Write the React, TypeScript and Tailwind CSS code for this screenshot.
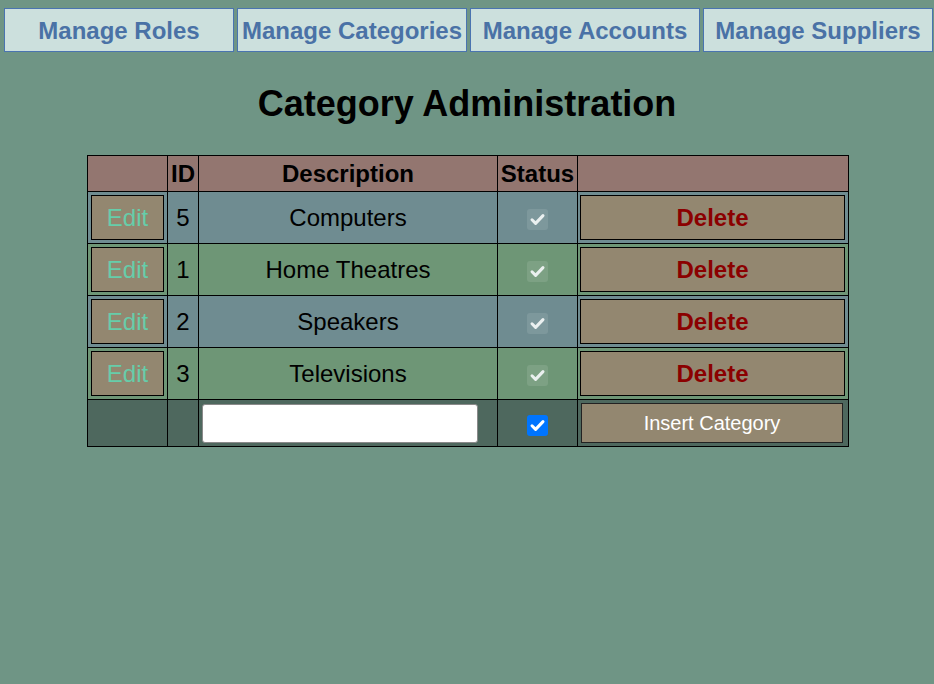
import React from "react";

const font = { fontFamily: '"Liberation Sans", Arial, sans-serif' };

function Check({ color, box }: { color: string; box: string }) {
  return (
    <span className={`inline-flex w-[21px] h-[21px] rounded-[3px] items-center justify-center align-middle ${box}`}>
      <svg width="21" height="21" viewBox="0 0 21 21">
        <path d="M5 10.8 L8.6 14.4 L16 6.6" fill="none" stroke={color} strokeWidth="3" strokeLinecap="round" strokeLinejoin="round" />
      </svg>
    </span>
  );
}

const rows = [
  { id: 5, name: "Computers", bg: "bg-[#6f8c91]" },
  { id: 1, name: "Home Theatres", bg: "bg-[#6e9676]" },
  { id: 2, name: "Speakers", bg: "bg-[#6f8c91]" },
  { id: 3, name: "Televisions", bg: "bg-[#6e9676]" },
];

export default function App() {
  const navs = ["Manage Roles", "Manage Categories", "Manage Accounts", "Manage Suppliers"];
  return (
    <div className="min-h-[684px] w-full bg-[#6f9585] pt-[8px]" style={font}>
      <div className="flex gap-[3px] pl-[4px]">
        {navs.map((n) => (
          <button
            key={n}
            className="w-[230px] h-[44px] pt-[2px] border border-[#4a74b0] bg-[#cce0dd] text-[#4a72a6] font-bold text-[24px] leading-none whitespace-nowrap flex items-center justify-center"
          >
            {n}
          </button>
        ))}
      </div>
      <h1 className="mt-[31px] h-[41px] leading-[41px] text-center text-[36px] font-bold text-black">
        Category Administration
      </h1>
      <table className="mt-[31px] ml-[87px] border-collapse table-fixed w-[761px] text-[24px] leading-[27px] text-black">
        <colgroup>
          <col className="w-[80px]" />
          <col className="w-[31px]" />
          <col className="w-[299px]" />
          <col className="w-[80px]" />
          <col className="w-[271px]" />
        </colgroup>
        <thead>
          <tr className="bg-[#937670] h-[36px]">
            <th className="border border-black p-0"></th>
            <th className="border border-black p-0 font-bold">ID</th>
            <th className="border border-black p-0 font-bold">Description</th>
            <th className="border border-black p-0 font-bold">Status</th>
            <th className="border border-black p-0"></th>
          </tr>
        </thead>
        <tbody>
          {rows.map((r) => (
            <tr key={r.id} className={`${r.bg} h-[52px]`}>
              <td className="border border-black px-[3px] py-0">
                <button className="block w-full h-[45px] border border-black bg-[#938770] text-[#66cdaa] text-[24px] leading-none">
                  Edit
                </button>
              </td>
              <td className="border border-black p-0 text-center">{r.id}</td>
              <td className="border border-black p-0 text-center">{r.name}</td>
              <td className="border border-black p-0 text-center">
                <Check color="rgba(240,244,244,0.95)" box="bg-white/10" />
              </td>
              <td className="border border-black pl-[2px] pr-[3px] py-0">
                <button className="block w-full h-[45px] border border-black bg-[#938770] text-[#8b0000] font-bold text-[24px] leading-none">
                  Delete
                </button>
              </td>
            </tr>
          ))}
          <tr className="bg-[#4e685e] h-[47px]">
            <td className="border border-black p-0"></td>
            <td className="border border-black p-0"></td>
            <td className="border border-black pl-[3px] pr-[19px] py-0">
              <input
                type="text"
                className="block w-full h-[39px] bg-white rounded-[3px] border border-[#8a8a8a] outline-none"
              />
            </td>
            <td className="border border-black p-0 text-center">
              <Check color="#ffffff" box="bg-[#0075ff]" />
            </td>
            <td className="border border-black pl-[3px] pr-[5px] py-0">
              <button className="block w-full h-[40px] border border-[#222] bg-[#938770] text-white text-[20px] leading-none">
                Insert Category
              </button>
            </td>
          </tr>
        </tbody>
      </table>
    </div>
  );
}
